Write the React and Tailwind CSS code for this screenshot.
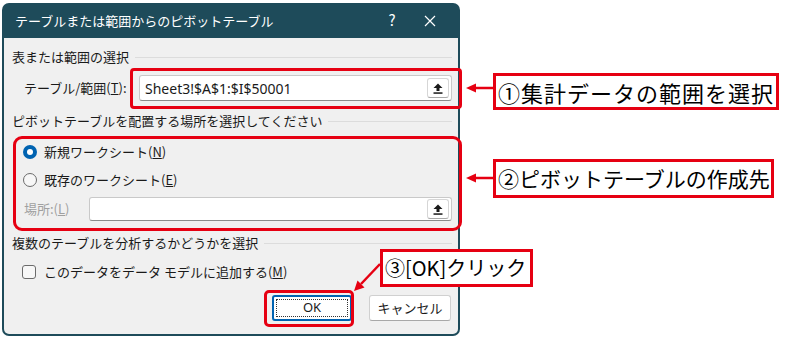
import React from "react";

const jp = { fontFamily: '"Noto Sans CJK JP", "Noto Sans", sans-serif' };

// upload (range select) icon
function PickIcon() {
  return (
    <svg width="10" height="11" viewBox="0 0 10 11">
      <path d="M5 0.5 L9.5 5 H6.5 V8 H3.5 V5 H0.5 Z" fill="#1a1a1a" />
      <rect x="0.5" y="9.3" width="9" height="1.5" fill="#1a1a1a" />
    </svg>
  );
}

function RangeInput({ value, className }) {
  return (
    <div className={`flex items-center bg-white border border-[#c9c9c9] border-b-[#8a8a8a] rounded-[3px] ${className}`}>
      <span className="flex-1 pl-[5px] text-[14px] text-[#1a1a1a]" style={{ fontFamily: '"Noto Sans", sans-serif' }}>
        {value}
      </span>
      <button className="mr-[2px] w-[22px] h-[20px] flex items-center justify-center bg-white border border-[#d6d6d6] border-b-[#a8a8a8] rounded-[3px]">
        <PickIcon />
      </button>
    </div>
  );
}

function GroupHeader({ children }) {
  return (
    <div className="h-[20px] flex items-center pl-[8px] pr-[6px] gap-[6px]">
      <span className="text-[13px] text-[#1a1a1a] whitespace-nowrap">{children}</span>
      <div className="flex-1 h-px bg-[#dcdcdc]" />
    </div>
  );
}

function Callout({ className, children }) {
  return (
    <div className={`absolute border-[3px] border-[#e60012] bg-white flex items-center pl-[2px] text-black leading-none whitespace-nowrap ${className}`}>
      {children}
    </div>
  );
}

export default function App() {
  return (
    <div className="relative w-[800px] h-[342px] bg-white overflow-hidden" style={jp}>
      {/* dialog */}
      <div className="ml-[2px] mt-[3px] w-[458px] h-[333px] rounded-[7px] bg-[#1e4b5a] p-[2px] pt-0 flex flex-col">
        <div className="h-[35px] flex items-center pl-[11px] text-white text-[13px]">
          <span className="flex-1">テーブルまたは範囲からのピボットテーブル</span>
          <span className="w-[20px] text-center text-[15px]">?</span>
          <span className="w-[56px] flex justify-center">
            <svg width="12" height="12" viewBox="0 0 12 12">
              <path d="M1 1 L11 11 M11 1 L1 11" stroke="#ffffff" strokeWidth="1.2" />
            </svg>
          </span>
        </div>

        <div className="flex-1 bg-[#f0f0f0] rounded-b-[5px] flex flex-col pt-[9px]">
          <GroupHeader>表または範囲の選択</GroupHeader>

          <div className="mt-[8px] h-[26px] flex items-center">
            <span className="w-[135px] pl-[20px] text-[13px] text-[#1a1a1a]">
              テーブル/範囲(<span className="underline">T</span>):
            </span>
            <RangeInput value="Sheet3!$A$1:$I$50001" className="w-[313px] h-[26px]" />
          </div>

          <div className="mt-[10px]">
            <GroupHeader>ピボットテーブルを配置する場所を選択してください</GroupHeader>
          </div>

          <div className="mt-[10px] h-[22px] flex items-center pl-[19px] gap-[7px]">
            <span className="w-[14px] h-[14px] rounded-full bg-[#0063b1] flex items-center justify-center">
              <span className="w-[6px] h-[6px] rounded-full bg-white" />
            </span>
            <span className="text-[13px] text-[#1a1a1a]">
              新規ワークシート(<span className="underline">N</span>)
            </span>
          </div>

          <div className="mt-[6px] h-[22px] flex items-center pl-[19px] gap-[7px]">
            <span className="w-[14px] h-[14px] rounded-full border border-[#6b6b6b] bg-[#f7f7f7]" />
            <span className="text-[13px] text-[#1a1a1a]">
              既存のワークシート(<span className="underline">E</span>)
            </span>
          </div>

          <div className="mt-[6px] h-[24px] flex items-center">
            <span className="w-[85px] pl-[20px] text-[13px] text-[#a0a0a0]">
              場所:(<span className="underline">L</span>)
            </span>
            <RangeInput value="" className="w-[363px] h-[24px]" />
          </div>

          <div className="mt-[12px]">
            <GroupHeader>複数のテーブルを分析するかどうかを選択</GroupHeader>
          </div>

          <div className="mt-[8px] h-[22px] flex items-center pl-[18px] gap-[8px]">
            <span className="w-[14px] h-[14px] rounded-[3px] border border-[#6b6b6b] bg-[#f7f7f7]" />
            <span className="text-[13px] text-[#1a1a1a]">
              このデータをデータ モデルに追加する(<span className="underline">M</span>)
            </span>
          </div>

          <div className="mt-[12px] h-[26px] flex justify-end gap-[17px] pr-[7px]">
            <button className="w-[80px] h-[26px] bg-white border-2 border-[#0063b1] rounded-[3px] p-[2px]">
              <span className="w-full h-full flex items-center justify-center border border-dotted border-[#333] text-[13px] text-[#1a1a1a]" style={{ fontFamily: '"Noto Sans", sans-serif' }}>
                OK
              </span>
            </button>
            <button className="w-[82px] h-[26px] bg-white border border-[#d0d0d0] border-b-[#a8a8a8] rounded-[3px] text-[13px] text-[#1a1a1a]">
              キャンセル
            </button>
          </div>
        </div>
      </div>

      {/* red highlight boxes */}
      <div className="absolute left-[130px] top-[68px] w-[332px] h-[41px] border-[3px] border-[#e60012] rounded-[4px]" />
      <div className="absolute left-[13px] top-[136px] w-[449px] h-[95px] border-[3px] border-[#e60012] rounded-[9px]" />
      <div className="absolute left-[264px] top-[290px] w-[90px] h-[37px] border-[3px] border-[#e60012] rounded-[5px]" />

      {/* callouts */}
      <Callout className="left-[493px] top-[73px] w-[286px] h-[37px] text-[22px] tracking-[1px]">①集計データの範囲を選択</Callout>
      <Callout className="left-[493px] top-[159px] w-[281px] h-[39px] text-[21px]">②ピボットテーブルの作成先</Callout>
      <Callout className="left-[380px] top-[249px] w-[153px] h-[38px] text-[20px]">③[OK]クリック</Callout>

      {/* arrows */}
      <svg className="absolute left-0 top-0" width="800" height="342">
        <g stroke="#e60012" strokeWidth="2.5" fill="#e60012">
          <line x1="493" y1="88" x2="474" y2="88" />
          <path d="M466 88 L476 83.5 L476 92.5 Z" stroke="none" />
          <line x1="493" y1="178" x2="474" y2="178" />
          <path d="M466 178 L476 173.5 L476 182.5 Z" stroke="none" />
          <line x1="380" y1="264" x2="361" y2="284" />
          <path d="M354 291 L357.5 280.5 L364.5 287.5 Z" stroke="none" />
        </g>
      </svg>
    </div>
  );
}
